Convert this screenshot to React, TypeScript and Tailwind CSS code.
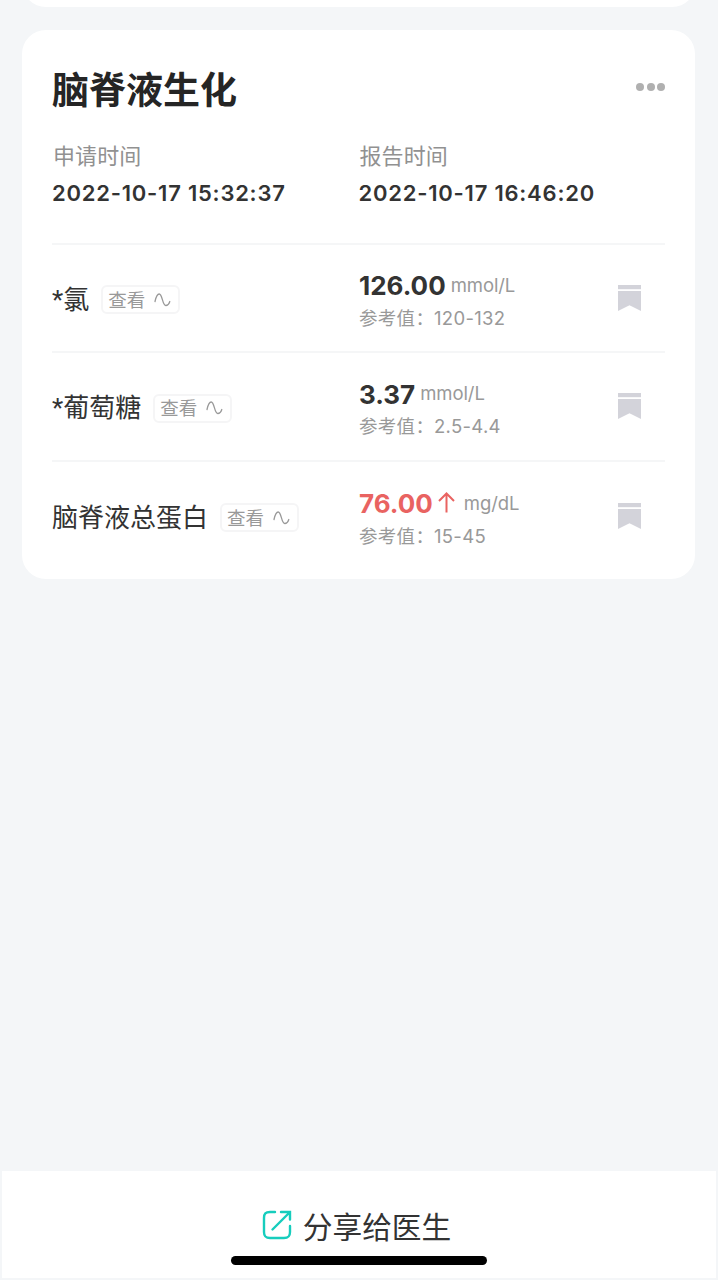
import clsx from 'clsx';

type ReportItem = {
    name: string;
    value: string;
    unit: string;
    range: string;
    high?: boolean;
};

const items: ReportItem[] = [
    { name: '*氯', value: '126.00', unit: 'mmol/L', range: '120-132' },
    { name: '*葡萄糖', value: '3.37', unit: 'mmol/L', range: '2.5-4.4' },
    { name: '脑脊液总蛋白', value: '76.00', unit: 'mg/dL', range: '15-45', high: true },
];

function WaveIcon() {
    return (
        <svg width="17" height="14" viewBox="0 0 17 14" fill="none" stroke="#999" strokeWidth="1.3" strokeLinecap="round">
            <path d="M1 8.5C2 4 3.4 1 5.2 1C8.5 1 8.300 12.500 11.800 12.500C13.800 12.500 15 11 15.800 8.500" />
        </svg>
    );
}

function BookmarkIcon() {
    return (
        <svg width="23" height="26" viewBox="0 0 23 26" fill="#d3d3da">
            <path d="M0 0H23V4.2H0Z" />
            <path d="M0 6H23V26L11.5 20.2L0 26Z" />
        </svg>
    );
}

function ArrowUpIcon() {
    return (
        <svg width="17" height="21" viewBox="0 0 17 21" fill="none" stroke="#e96361" strokeWidth="2">
            <path d="M8.5 20.5V1.5M1 9L8.5 1.5L16 9" />
        </svg>
    );
}

function ShareIcon() {
    return (
        <svg width="30" height="30" viewBox="0 0 30 30" fill="none" stroke="#16cdbd" strokeWidth="2.4" strokeLinecap="round">
            <path d="M13 2H8C3.5 2 2 3.5 2 8V22C2 26.5 3.5 28 8 28H22C26.5 28 28 26.5 28 22V16" />
            <path d="M10.5 19.5L27.5 2.5M19 2H28V9.5" />
        </svg>
    );
}

function TimeField({ label, value }: { label: string; value: string }) {
    return (
        <div>
            <div className="pl-px text-[22px] leading-8 tracking-[0.1px] text-[#919191]">{label}</div>
            <div className="mt-[3px] text-[22px] leading-9 font-semibold tracking-[0.77px] whitespace-nowrap text-[#333]">
                {value}
            </div>
        </div>
    );
}

function ItemRow({ item, last }: { item: ReportItem; last: boolean }) {
    return (
        <div className={clsx('grid h-[108.5px] grid-cols-2 items-center', !last && 'border-b-2 border-[#f5f6f7]')}>
            <div className="flex items-center gap-3">
                <span className="pt-1 font-['Roboto','Noto_Sans_CJK_SC',sans-serif] text-[26px] leading-9 text-[#333]">
                    {item.name}
                </span>
                <button className="mt-1 flex h-[29px] w-[79px] items-center justify-between rounded-md border-2 border-[#f5f5f6] pr-[7px] pl-[5px] text-[18.5px] leading-none text-[#999]">
                    查看
                    <WaveIcon />
                </button>
            </div>

            <div className="flex items-center justify-between pr-6">
                <div className="pt-1 pl-[0.5px]">
                    <div className="flex h-9 items-center">
                        <span className={clsx('text-[26px] font-bold', item.high ? 'text-[#e96361]' : 'text-[#333]')}>
                            {item.value}
                        </span>
                        {item.high && (
                            <span className="mr-1 mb-0.5 ml-[5px]">
                                <ArrowUpIcon />
                            </span>
                        )}
                        <span className="ml-[5px] text-[18.5px] tracking-[-0.1px] text-[#999]">{item.unit}</span>
                    </div>
                    <div className="flex h-7 items-center pt-0.5 text-[18.5px] tracking-[0.3px] text-[#999]">
                        <span className="w-[75px] whitespace-nowrap">参考值：</span>
                        <span>{item.range}</span>
                    </div>
                </div>
                <BookmarkIcon />
            </div>
        </div>
    );
}

export default function App() {
    return (
        <div className="flex h-[1280px] w-[718px] flex-col overflow-hidden bg-[#f4f6f8] font-['Inter','Noto_Sans_CJK_SC',sans-serif]">
            <div className="mx-[22px] h-[7px] shrink-0 overflow-hidden">
                <div className="-mt-14 h-[63px] rounded-[24px] bg-white" />
            </div>

            <section className="mx-[22px] mt-[23px] h-[549px] w-[673px] shrink-0 rounded-[24px] bg-white px-[30px]">
                <div className="flex items-center justify-between pt-8">
                    <h1 className="pt-1.5 text-[37px] leading-[46px] font-bold text-[#252525]">脑脊液生化</h1>
                    <div className="mb-0.5 flex gap-[2.5px]">
                        <i className="size-2 rounded-full bg-[#b0b0b0]" />
                        <i className="size-2 rounded-full bg-[#b0b0b0]" />
                        <i className="size-2 rounded-full bg-[#b0b0b0]" />
                    </div>
                </div>

                <div className="mt-[26px] grid h-[104.5px] grid-cols-2 border-b-2 border-[#f5f6f7]">
                    <TimeField label="申请时间" value="2022-10-17 15:32:37" />
                    <TimeField label="报告时间" value="2022-10-17 16:46:20" />
                </div>

                {items.map((item, i) => (
                    <ItemRow key={item.name} item={item} last={i === items.length - 1} />
                ))}
            </section>

            <footer className="mx-0.5 mt-auto mb-0.5 flex h-[107px] shrink-0 flex-col items-center bg-white">
                <button className="mt-8 mr-[5px] flex h-11 items-center gap-[11px] text-[29.7px] text-[#333]">
                    <ShareIcon />
                    <span className="pt-[5px]">分享给医生</span>
                </button>
                <div className="mt-[9px] h-[9px] w-64 shrink-0 rounded-full bg-black" />
            </footer>
        </div>
    );
}
